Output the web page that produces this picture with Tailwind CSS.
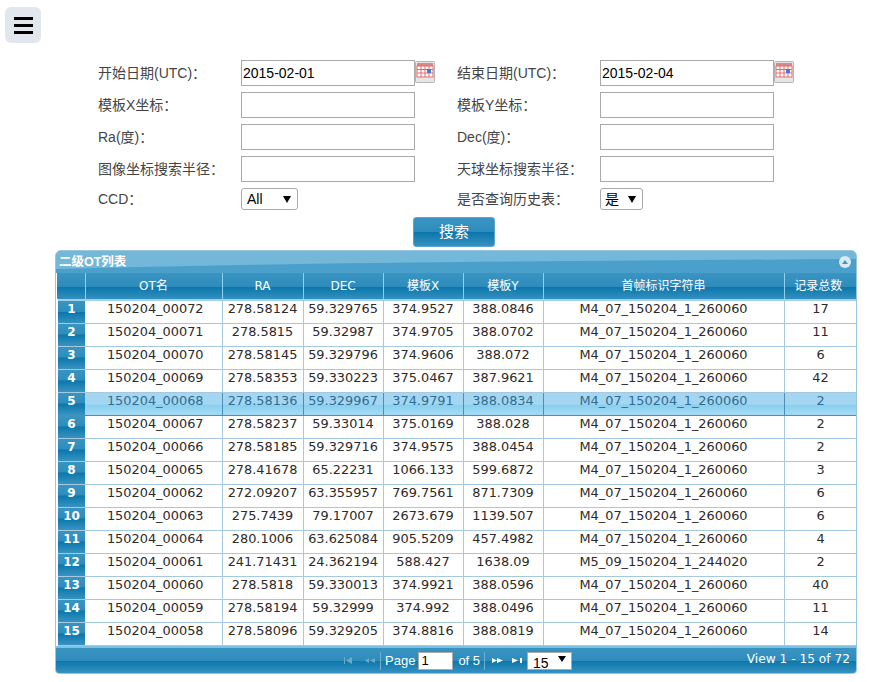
<!DOCTYPE html>
<html lang="en">
  <head>
    <meta charset="UTF-8" />
    <title>二级OT列表</title>
    <script src="https://cdn.jsdelivr.net/npm/@tailwindcss/browser@4"></script>
  </head>
  <body class="bg-white w-[870px] h-[682px] overflow-hidden font-['Liberation_Sans','Noto_Sans_CJK_SC',sans-serif]">
    <div class="pl-[5px] pt-[7px]">
      <button class="w-9 h-9 bg-[#e2e6ee] rounded-md flex flex-col items-center justify-center gap-[4px]">
        <span class="block w-[19px] h-[3px] bg-black"></span>
        <span class="block w-[19px] h-[3px] bg-black"></span>
        <span class="block w-[19px] h-[3px] bg-black"></span>
      </button>
    </div>

    <!-- search form -->
    <form class="mt-[17px] ml-[98px] grid grid-cols-[143px_216px_143px_216px] auto-rows-[32px] text-[14px] text-[#444]">
      <label class="pt-[3px]">开始日期(UTC)：</label>
      <div class="flex items-start">
        <input type="text" value="2015-02-01" class="w-[174px] h-[26px] border border-[#a9a9a9] px-[1px] text-black text-[14px]" />
        <svg width="20" height="22" viewBox="0 0 20 22" class="mt-px">
          <rect x="0.5" y="0.5" width="19" height="21" rx="1" fill="#e6e6e6" stroke="#b5b5b5" />
          <rect x="2" y="2" width="16" height="3" fill="#d88" />
          <rect x="2" y="5" width="16" height="11" fill="#fff" stroke="#e66a6a" />
          <path d="M6 5v11M10 5v11M14 5v11M2 8.500h16M2 12h16" stroke="#e66a6a" />
          <rect x="12" y="8" width="4" height="4" fill="#4f74d8" />
        </svg>
      </div>
      <label class="pt-[3px]">结束日期(UTC)：</label>
      <div class="flex items-start">
        <input type="text" value="2015-02-04" class="w-[174px] h-[26px] border border-[#a9a9a9] px-[1px] text-black text-[14px]" />
        <svg width="20" height="22" viewBox="0 0 20 22" class="mt-px">
          <rect x="0.5" y="0.5" width="19" height="21" rx="1" fill="#e6e6e6" stroke="#b5b5b5" />
          <rect x="2" y="2" width="16" height="3" fill="#d88" />
          <rect x="2" y="5" width="16" height="11" fill="#fff" stroke="#e66a6a" />
          <path d="M6 5v11M10 5v11M14 5v11M2 8.500h16M2 12h16" stroke="#e66a6a" />
          <rect x="12" y="8" width="4" height="4" fill="#4f74d8" />
        </svg>
      </div>

      <label class="pt-[3px]">模板X坐标：</label>
      <div><input type="text" class="w-[174px] h-[26px] border border-[#a9a9a9]" /></div>
      <label class="pt-[3px]">模板Y坐标：</label>
      <div><input type="text" class="w-[174px] h-[26px] border border-[#a9a9a9]" /></div>

      <label class="pt-[3px]">Ra(度)：</label>
      <div><input type="text" class="w-[174px] h-[26px] border border-[#a9a9a9]" /></div>
      <label class="pt-[3px]">Dec(度)：</label>
      <div><input type="text" class="w-[174px] h-[26px] border border-[#a9a9a9]" /></div>

      <label class="pt-[3px]">图像坐标搜索半径：</label>
      <div><input type="text" class="w-[174px] h-[26px] border border-[#a9a9a9]" /></div>
      <label class="pt-[3px]">天球坐标搜索半径：</label>
      <div><input type="text" class="w-[174px] h-[26px] border border-[#a9a9a9]" /></div>

      <label class="pt-[1px]">CCD：</label>
      <div class="relative w-[57px] h-[22px] border border-[#a9a9a9] rounded-[3px] text-black pl-[5px] leading-[21px]">All
        <span class="absolute right-[6px] top-[7px] w-0 h-0 border-x-[4px] border-x-transparent border-t-[7px] border-t-black"></span>
      </div>
      <label class="pt-[1px]">是否查询历史表：</label>
      <div class="relative w-[43px] h-[22px] border border-[#a9a9a9] rounded-[3px] text-black pl-[4px] leading-[21px]">是
        <span class="absolute right-[6px] top-[7px] w-0 h-0 border-x-[4px] border-x-transparent border-t-[7px] border-t-black"></span>
      </div>
    </form>

    <div class="-mt-[3px] ml-[413px]">
      <button class="w-[82px] h-[30px] rounded-[3px] border border-[#5ba5cc] text-white text-[15px] bg-[linear-gradient(#3a94c2_0%,#2d8cbc_50%,#0a76ab_51%,#3692c0_100%)]">搜索</button>
    </div>

    <!-- grid panel -->
    <div class="mt-[3px] ml-[55px] w-[802px] h-[424px] rounded-t-[6px] rounded-b-[4px] border border-[#9cc6e0] overflow-hidden flex flex-col bg-white">
      <div class="relative h-[22px] shrink-0 bg-[#4aa0cb] text-white text-[12.500px] font-bold">
        <svg class="absolute inset-0 w-full h-full" viewBox="0 0 800 22" preserveAspectRatio="none">
          <path d="M0 0H800V8C500 10 200 12 0 18Z" fill="#73b8d8" />
        </svg>
        <span class="absolute left-[3px] top-[2px]">二级OT列表</span>
        <span class="absolute right-[5px] top-[5px] w-[12px] h-[12px] rounded-full bg-[#dbe9f2] flex items-center justify-center">
          <span class="w-0 h-0 border-x-[3.500px] border-x-transparent border-b-[4px] border-b-[#3f97c5]"></span>
        </span>
      </div>

      <table class="table-fixed border-collapse w-[800px] text-[12.900px] font-['DejaVu_Sans','Noto_Sans_CJK_SC',sans-serif]">
        <colgroup>
          <col class="w-[28px]" />
          <col class="w-[137px]" />
          <col class="w-[81px]" />
          <col class="w-[80px]" />
          <col class="w-[80px]" />
          <col class="w-[80px]" />
          <col class="w-[241px]" />
          <col class="w-[73px]" />
        </colgroup>
        <thead>
          <tr class="h-[27px] text-white text-[12px] font-normal bg-[linear-gradient(#3a94c2_0%,#2d8cbc_50%,#0a76ab_51%,#3692c0_100%)]">
            <th class="font-normal"></th>
            <th class="font-normal border-l border-[#8fd0ef]">OT名</th>
            <th class="font-normal border-l border-[#8fd0ef]">RA</th>
            <th class="font-normal border-l border-[#8fd0ef]">DEC</th>
            <th class="font-normal border-l border-[#8fd0ef]">模板X</th>
            <th class="font-normal border-l border-[#8fd0ef]">模板Y</th>
            <th class="font-normal border-l border-[#8fd0ef]">首帧标识字符串</th>
            <th class="font-normal border-l border-[#8fd0ef] pr-[5px]">记录总数</th>
          </tr>
        </thead>
        <tbody id="rows" class="border-t-2 border-[#a6cfe8]"></tbody>
      </table>

      <div class="mt-auto relative h-[27px] shrink-0 border-t-2 border-[#7cc0e2] text-white text-[12.200px] font-['DejaVu_Sans',sans-serif] bg-[linear-gradient(#3a94c2_0%,#2d8cbc_50%,#0a76ab_51%,#3692c0_100%)]">
        <div class="absolute left-[288px] top-0 h-[25px] flex items-center">
          <svg width="31" height="9" viewBox="0 0 31 9" fill="#6fa9c8">
            <path d="M0 1h1v7H0zM8 1 2 4.500 8 8zM25 2 21 4.500 25 7zM31 2 26 4.500 31 7z" />
          </svg>
          <span class="w-px h-[18px] bg-[#6fb0d0] ml-[5px]"></span>
          <span class="ml-[4px] font-['Liberation_Sans',sans-serif] text-[13px]">Page</span>
          <input type="text" value="1" class="ml-[3px] w-[35px] h-[18px] bg-white border border-[#a9a9a9] text-black text-[13px] px-[2px] font-['Liberation_Sans',sans-serif]" />
          <span class="ml-[5px] font-['Liberation_Sans',sans-serif] text-[13px]">of 5</span>
          <span class="w-px h-[18px] bg-[#6fb0d0] ml-[4px]"></span>
          <svg width="30" height="9" viewBox="0 0 30 9" fill="#fff" class="ml-[7px]">
            <path d="M0 2 5 4.500 0 7zM5 2 11 4.500 5 7zM20 2 26 4.500 20 7zM28 2h2v5h-2z" />
          </svg>
          <div class="relative ml-[5px] w-[45px] h-[18px] bg-white border border-[#a9a9a9] text-black text-[14px] pl-[5px] leading-[21px] font-['Liberation_Sans',sans-serif]">15
            <span class="absolute right-[5px] top-[3px] w-0 h-0 border-x-[4px] border-x-transparent border-t-[6px] border-t-black"></span>
          </div>
        </div>
        <span class="absolute right-[6px] top-[2px]">View 1 - 15 of 72</span>
      </div>
    </div>

    <script>
      const data = [
        ["150204_00072", "278.58124", "59.329765", "374.9527", "388.0846", "M4_07_150204_1_260060", "17"],
        ["150204_00071", "278.5815", "59.32987", "374.9705", "388.0702", "M4_07_150204_1_260060", "11"],
        ["150204_00070", "278.58145", "59.329796", "374.9606", "388.072", "M4_07_150204_1_260060", "6"],
        ["150204_00069", "278.58353", "59.330223", "375.0467", "387.9621", "M4_07_150204_1_260060", "42"],
        ["150204_00068", "278.58136", "59.329967", "374.9791", "388.0834", "M4_07_150204_1_260060", "2"],
        ["150204_00067", "278.58237", "59.33014", "375.0169", "388.028", "M4_07_150204_1_260060", "2"],
        ["150204_00066", "278.58185", "59.329716", "374.9575", "388.0454", "M4_07_150204_1_260060", "2"],
        ["150204_00065", "278.41678", "65.22231", "1066.133", "599.6872", "M4_07_150204_1_260060", "3"],
        ["150204_00062", "272.09207", "63.355957", "769.7561", "871.7309", "M4_07_150204_1_260060", "6"],
        ["150204_00063", "275.7439", "79.17007", "2673.679", "1139.507", "M4_07_150204_1_260060", "6"],
        ["150204_00064", "280.1006", "63.625084", "905.5209", "457.4982", "M4_07_150204_1_260060", "4"],
        ["150204_00061", "241.71431", "24.362194", "588.427", "1638.09", "M5_09_150204_1_244020", "2"],
        ["150204_00060", "278.5818", "59.330013", "374.9921", "388.0596", "M4_07_150204_1_260060", "40"],
        ["150204_00059", "278.58194", "59.32999", "374.992", "388.0496", "M4_07_150204_1_260060", "11"],
        ["150204_00058", "278.58096", "59.329205", "374.8816", "388.0819", "M4_07_150204_1_260060", "14"],
      ];
      const rows = document.getElementById("rows");
      data.forEach((row, i) => {
        const selected = i === 4;
        const rowClass = selected
          ? "h-[23px] text-[#2f6d92] bg-[linear-gradient(#a5d6f1_0%,#a5d6f1_55%,#88cff0_60%,#a5dcf5_100%)] border-b border-[#4f8db3]"
          : "h-[23px] text-[#2e2a2a] border-b border-[#a6c9e2]";
        const cellClass = selected
          ? "align-top leading-[16px] text-center whitespace-nowrap border-r border-[#4f8db3]"
          : "align-top leading-[16px] text-center whitespace-nowrap border-r border-[#a6c9e2]";
        rows.innerHTML += `
          <tr class="${rowClass}">
            <td class="align-top leading-[16px] text-center text-white text-[12px] font-bold border-l-2 border-white bg-[linear-gradient(#3a94c2_0%,#2d8cbc_50%,#0a76ab_51%,#3692c0_100%)]">${i + 1}</td>
            ${row.map((value, col) => `<td class="${col === 0 ? "pl-[4px] " : ""}${cellClass}">${value}</td>`).join("")}
          </tr>`;
      });
    </script>
  </body>
</html>
